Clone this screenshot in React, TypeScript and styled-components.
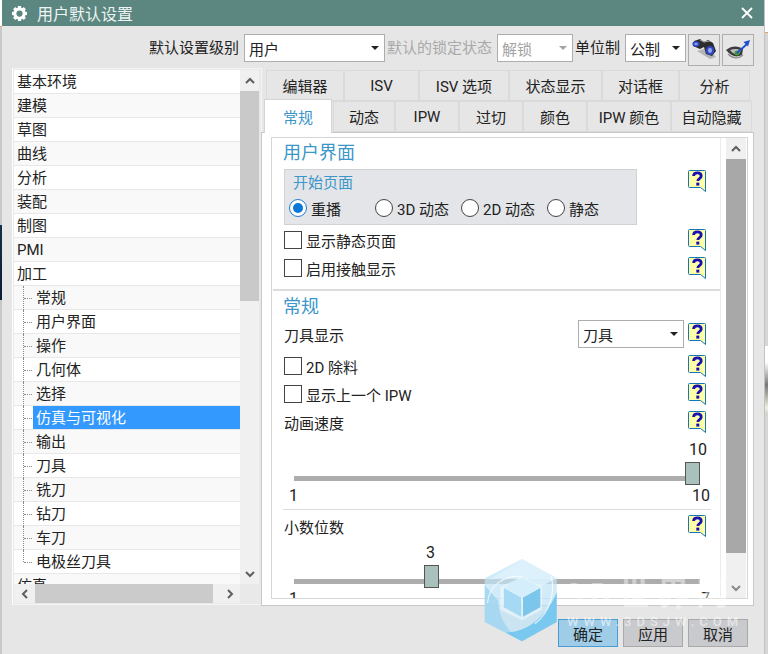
import React from "react";
import styled, { createGlobalStyle } from "styled-components";

const Global = createGlobalStyle`
  html, body { margin: 0; padding: 0; width: 768px; height: 654px; overflow: hidden; background: #d4d4d4; }
  * { box-sizing: border-box; }
  body { font-family: Roboto, "Noto Sans CJK SC", sans-serif; font-size: 15px; color: #222; }
`;

const Page = styled.div`
  position: relative;
  display: flex;
  width: 768px;
  height: 654px;
  overflow: hidden;
`;
const LeftStrip = styled.div`
  width: 2px;
  flex: none;
  background: linear-gradient(to bottom, #fff 0, #fff 26px, #e8a060 26px, #e8a060 27px, #c8c8c8 27px, #c8c8c8 225px, #16304f 225px, #0e1c33 300px, #c8c8c8 300px);
`;
const RightStrip = styled.div`
  flex: 1;
  background: linear-gradient(to bottom, #fff 0, #fff 32px, #e8a060 32px, #e8a060 33px, #d6d6d6 33px, #d6d6d6 346px, #fff 346px, #fff 362px, #777 385px, #f2f0e2 408px, #d0d0d0 414px, #d6d6d6 416px);
  border-left: 1px solid #c2c2c2;
`;
const Window = styled.div`
  width: 762px;
  flex: none;
  display: flex;
  flex-direction: column;
  background: #e6e6e6;
`;
const TitleBar = styled.div`
  height: 26px;
  flex: none;
  display: flex;
  align-items: center;
  background: #5c8780;
  color: #fff;
  padding: 0 11px 0 10px;
  font-size: 16px;
`;
const TitleText = styled.span`
  margin-left: 10px;
  flex: 1;
  color: #eef4f3;
`;
const Toolbar = styled.div`
  height: 42px;
  flex: none;
  display: flex;
  align-items: flex-start;
  padding: 8px 0 0 147px;
`;
const ToolLabel = styled.span<{ $muted?: boolean; $w: number; $pl?: number }>`
  width: ${(p) => p.$w}px;
  padding-left: ${(p) => p.$pl ?? 0}px;
  flex: none;
  height: 28px;
  line-height: 28px;
  white-space: nowrap;
  color: ${(p) => (p.$muted ? "#a9a9a9" : "#222")};
`;
const Select = styled.div<{ $w: number; $disabled?: boolean; $ml?: number }>`
  width: ${(p) => p.$w}px;
  margin-left: ${(p) => p.$ml ?? 0}px;
  height: 28px;
  flex: none;
  display: flex;
  align-items: center;
  justify-content: space-between;
  background: #fff;
  border: 1px solid #adadad;
  padding: 0 5px 0 4px;
  color: ${(p) => (p.$disabled ? "#a3a3a3" : "#222")};
`;
const Caret = styled.i<{ $disabled?: boolean }>`
  width: 0;
  height: 0;
  border-left: 4px solid transparent;
  border-right: 4px solid transparent;
  border-top: 4px solid ${(p) => (p.$disabled ? "#a3a3a3" : "#222")};
`;
const IconButton = styled.button<{ $ml: number }>`
  width: 32px;
  height: 32px;
  flex: none;
  margin-left: ${(p) => p.$ml}px;
  padding: 0;
  background: #e6e6e6;
  border: 1px solid #adadad;
  display: flex;
  align-items: center;
  justify-content: center;
`;
const Body = styled.div`
  flex: 1;
  display: flex;
  align-items: flex-start;
  padding: 0 0 0 10px;
`;
const Tree = styled.div`
  width: 250px;
  height: 537px;
  flex: none;
  background: #e9e9e9;
  border: 1px solid #f4f4f4;
  border-left-color: #fff;
  padding: 1px 2px 0 1px;
  display: grid;
  grid-template-columns: 226px 19px;
  grid-template-rows: 514px 19px;
`;
const TreeRows = styled.div`
  overflow: hidden;
  background: #fff;
`;
const Row = styled.div<{ $alt?: boolean }>`
  height: 24px;
  line-height: 23px;
  display: flex;
  align-items: center;
  padding: 2px 0 0 3px;
  background: ${(p) => (p.$alt ? "#f9f9f9" : "#fff")};
  border-bottom: 1px solid #e8e8e8;
  white-space: nowrap;
`;
const ChildRow = styled(Row)`
  position: relative;
  padding-left: 22px;
  &::before {
    content: "";
    position: absolute;
    left: 9px;
    top: 0;
    bottom: -1px;
    border-left: 1px dotted #8a8a8a;
  }
  &::after {
    content: "";
    position: absolute;
    left: 10px;
    top: 12px;
    width: 8px;
    border-top: 1px dotted #8a8a8a;
  }
`;
const LastChildRow = styled(ChildRow)`
  &::before { bottom: 11px; }
`;
const Selected = styled.span`
  display: block;
  flex: 1;
  margin: -2px 0 0 -3px;
  padding-left: 3px;
  line-height: 25px;
  height: 23px;
  background: #3399ff;
  color: #fff;
`;
const VScroll = styled.div<{ $w?: number; $mr?: number }>`
  display: flex;
  flex-direction: column;
  flex: none;
  width: ${(p) => (p.$w ? `${p.$w}px` : "auto")};
  margin-right: ${(p) => p.$mr ?? 0}px;
  background: #f0f0f0;
`;
const ArrowCell = styled.div`
  flex: none;
  height: 21px;
  display: flex;
  align-items: center;
  justify-content: center;
`;
const VThumb = styled.div<{ $h: number; $c: string }>`
  height: ${(p) => p.$h}px;
  flex: none;
  background: ${(p) => p.$c};
`;
const Spacer = styled.div`
  flex: 1;
`;
const HScroll = styled.div`
  display: flex;
  align-items: stretch;
  background: #f0f0f0;
`;
const HArrow = styled.div`
  width: 21px;
  flex: none;
  display: flex;
  align-items: center;
  justify-content: center;
`;
const HThumb = styled.div`
  width: 178px;
  flex: none;
  background: #cbcbcb;
`;
const RightColumn = styled.div`
  width: 494px;
  margin-left: 2px;
  flex: none;
`;
const TabRow = styled.div<{ $pl: number; $h: number }>`
  display: flex;
  height: ${(p) => p.$h}px;
  padding-left: ${(p) => p.$pl}px;
  align-items: flex-end;
`;
const Tab = styled.div<{ $w: number }>`
  width: ${(p) => p.$w}px;
  height: 31px;
  flex: none;
  display: flex;
  align-items: center;
  justify-content: center;
  background: #e6e6e6;
  border: 1px solid #dadada;
  white-space: nowrap;
`;
const ActiveTab = styled(Tab)`
  height: 34px;
  background: #fff;
  border-color: #d4d4d4;
  border-bottom: none;
  color: #3a94c6;
  position: relative;
  z-index: 1;
  margin: 0 1px -1px 0;
`;
const Outer = styled.div`
  width: 493px;
  height: 474px;
  margin-left: -3px;
  background: #fff;
  border: 1px solid #c8c8c8;
  padding: 4px 5px 6px 9px;
`;
const Inner = styled.div`
  height: 100%;
  border: 1px solid #d6d6d6;
  display: flex;
`;
const Scroller = styled.div`
  flex: 1;
  min-width: 0;
  overflow: hidden;
  border-right: 1px solid #ececec;
  margin-right: 5px;
`;
const Heading = styled.div<{ $mt?: number }>`
  font-size: 18px;
  line-height: 24px;
  color: #3b96c9;
  padding-left: 11px;
  margin-top: ${(p) => p.$mt ?? 0}px;
`;
const Line = styled.div<{ $h: number; $mt?: number }>`
  display: flex;
  align-items: center;
  height: ${(p) => p.$h}px;
  padding-left: 12px;
  padding-right: 13px;
  margin-top: ${(p) => p.$mt ?? 0}px;
`;
const Grow = styled.div`
  flex: 1;
`;
const GroupRow = styled.div`
  display: flex;
  padding: 4px 13px 0 12px;
  height: 61px;
`;
const Group = styled.div`
  width: 353px;
  height: 56px;
  background: #e3e5e8;
  border: 1px solid #d2d2d2;
  padding: 4px 0 0 4px;
  margin-right: 51px;
`;
const GroupHelp = styled.div`
  margin-top: 1px;
`;
const GroupTitle = styled.div`
  color: #3b96c9;
  line-height: 18px;
  padding-left: 4px;
`;
const Radios = styled.div`
  display: flex;
  height: 28px;
  align-items: center;
  margin-top: 2px;
`;
const RadioItem = styled.div<{ $w: number }>`
  width: ${(p) => p.$w}px;
  display: flex;
  align-items: center;
  gap: 4px;
  white-space: nowrap;
`;
const RadioDot = styled.span<{ $on?: boolean }>`
  width: 18px;
  height: 18px;
  flex: none;
  border-radius: 50%;
  background: #fff;
  border: 1px solid ${(p) => (p.$on ? "#1c7bd0" : "#444")};
  position: relative;
  ${(p) =>
    p.$on
      ? `&::after { content: ""; position: absolute; left: 3px; top: 3px; width: 10px; height: 10px; border-radius: 50%; background: #0a78d7; }`
      : ""}
`;
const Check = styled.span`
  width: 18px;
  height: 18px;
  flex: none;
  background: #fff;
  border: 1px solid #444;
  margin-right: 4px;
`;
const Divider = styled.div<{ $ml: number; $mr: number; $h: number; $mt: number }>`
  height: ${(p) => p.$h}px;
  background: #dcdcdc;
  margin: ${(p) => p.$mt}px ${(p) => p.$mr}px 0 ${(p) => p.$ml}px;
`;
const ToolSelect = styled(Select)`
  margin-right: 4px;
`;
const SliderTop = styled.div<{ $pl: number; $h: number; $pt?: number }>`
  height: ${(p) => p.$h}px;
  padding-left: ${(p) => p.$pl}px;
  padding-top: ${(p) => p.$pt ?? 0}px;
  font-size: 16px;
  line-height: 18px;
  white-space: nowrap;
`;
const Track = styled.div`
  position: relative;
  height: 23px;
  margin: 0 0 0 22px;
  width: 406px;
  &::before {
    content: "";
    position: absolute;
    left: 0;
    right: 0;
    top: 14px;
    height: 5px;
    background: #adadad;
  }
`;
const Thumb = styled.div<{ $left: number }>`
  position: absolute;
  left: ${(p) => p.$left}px;
  top: 0;
  width: 15px;
  height: 23px;
  background: #a9c0bd;
  border: 1px solid #555;
`;
const Ends = styled.div`
  display: flex;
  justify-content: space-between;
  height: 20px;
  align-items: center;
  padding: 0 0 0 17px;
  width: 438px;
  font-size: 16px;
`;
const Footer = styled.div`
  height: 49px;
  flex: none;
  display: flex;
  justify-content: flex-end;
  gap: 5px;
  padding: 13px 16px 0 0;
`;
const Btn = styled.button<{ $primary?: boolean }>`
  width: 60px;
  height: 28px;
  padding: 0;
  font: inherit;
  color: #222;
  background: ${(p) => (p.$primary ? "#9fcce7" : "#c9cacd")};
  border: 1px solid ${(p) => (p.$primary ? "#4b9cd2" : "#a9a9a9")};
`;
const Watermark = styled.div`
  position: absolute;
  left: 482px;
  top: 559px;
  width: 272px;
  height: 95px;
  pointer-events: none;
`;
const WmSvg = styled.svg`
  position: absolute;
  left: 0;
  top: 0;
`;
const HelpSvg = styled.svg`
  flex: none;
  display: block;
`;
const WmTitle = styled.div`
  position: absolute;
  left: 83px;
  top: 15px;
  font-size: 32px;
  line-height: 40px;
  font-weight: 700;
  letter-spacing: 7px;
  white-space: nowrap;
  color: rgba(255, 255, 255, 0.45);
`;
const WmUrl = styled.div`
  position: absolute;
  left: 85px;
  top: 54px;
  font-size: 13px;
  font-weight: 500;
  line-height: 18px;
  letter-spacing: 5px;
  white-space: nowrap;
  color: rgba(255, 255, 255, 0.55);
`;

const Chevron = ({ dir, c = "#5f5f5f", s = 10 }: { dir: "up" | "down" | "left" | "right"; c?: string; s?: number }) => {
  const d = {
    up: "M1 7 L5 3 L9 7",
    down: "M1 3 L5 7 L9 3",
    left: "M7 1 L3 5 L7 9",
    right: "M3 1 L7 5 L3 9",
  }[dir];
  return (
    <svg width={s} height={s} viewBox="0 0 10 10">
      <path d={d} fill="none" stroke={c} strokeWidth="2" />
    </svg>
  );
};

const Gear = () => (
  <svg width="15" height="15" viewBox="0 0 24 24">
    <g fill="#fff">
      <circle cx="12" cy="12" r="7.500" fill="none" stroke="#fff" strokeWidth="5" />
      <rect x="9.500" y="0" width="5" height="6" />
      <rect x="9.500" y="18" width="5" height="6" />
      <rect x="0" y="9.500" width="6" height="5" />
      <rect x="18" y="9.500" width="6" height="5" />
      <rect x="9.500" y="0" width="5" height="6" transform="rotate(45 12 12)" />
      <rect x="9.500" y="18" width="5" height="6" transform="rotate(45 12 12)" />
      <rect x="0" y="9.500" width="6" height="5" transform="rotate(45 12 12)" />
      <rect x="18" y="9.500" width="6" height="5" transform="rotate(45 12 12)" />
    </g>
  </svg>
);

const CloseX = () => (
  <svg width="12" height="12" viewBox="0 0 12 12">
    <path d="M1 1 L11 11 M11 1 L1 11" stroke="#fff" strokeWidth="1.8" />
  </svg>
);

const Binoculars = () => (
  <svg width="26" height="24" viewBox="0 0 26 24">
    <path d="M6 13 L19 21 L25 19 L16 10z" fill="#b4b4b4" />
    <path d="M3 3 L9 1 L13 4 L17 2 L22 5 L25 13 L21 18 L15 16 L13 9 L9 11 L2 8z" fill="#2c2c2c" />
    <path d="M9 2 L13 4 L19 3" stroke="#a5a5a5" strokeWidth="1" fill="none" />
    <ellipse cx="5" cy="6" rx="3.600" ry="2.800" fill="#2f49c4" />
    <ellipse cx="5" cy="6" rx="1.700" ry="1.200" fill="#8ea0ea" />
    <ellipse cx="19" cy="12.500" rx="4.200" ry="4.600" fill="#2f49c4" />
    <ellipse cx="19" cy="12.500" rx="2" ry="2.400" fill="#98a8ee" />
  </svg>
);

const EyeArrow = () => (
  <svg width="26" height="22" viewBox="0 0 26 22">
    <path d="M1 11 C7 6 14 7 18 10 L17 16 C11 19 6 17 1 11z" fill="#3c3c3c" />
    <path d="M5 11 C9 9.500 13 9.500 16 11.500 L14 15 C11 16 8 15 5 11z" fill="#bdbdbd" />
    <circle cx="12" cy="14" r="2.500" fill="#3f9a35" />
    <path d="M3 15 C8 20 14 20 18 16" stroke="#8e8e8e" strokeWidth="1.300" fill="none" />
    <path d="M12 14 L22 5" stroke="#1f4fd0" strokeWidth="1.800" />
    <path d="M25 1 L18.500 3 L23 7.500z" fill="#1f4fd0" />
  </svg>
);

const Help = () => (
  <HelpSvg width="19" height="23" viewBox="0 0 19 23">
    <path d="M1.500 .5 H16.500 Q17.500 .5 17.500 1.500 V21.500 L12.500 17.500 H1.500 Q.5 17.500 .5 16.500 V1.500 Q.5 .5 1.500 .5z" fill="#ffffa8" stroke="#1477b5" />
    <path d="M5.600 6 C5.800 1.800 13.200 2 13.200 6 C13.200 8.800 9.800 8.500 9.800 11" fill="none" stroke="#1a10b0" strokeWidth="2.800" />
    <rect x="8.300" y="12.600" width="3" height="3" fill="#1a10b0" />
  </HelpSvg>
);

const Logo = () => (
  <WmSvg width="82" height="84" viewBox="0 0 90 96" preserveAspectRatio="none">
    <path d="M44 0 L82 22 L82 72 L44 94 L3 72 L3 22z" fill="#bfe3f7" fillOpacity="0.72" />
    <path d="M44 0 L82 22 L60 34 C50 22 30 18 8 24z" fill="#dff2fc" fillOpacity="0.8" />
    <path d="M3 30 L3 72 L44 94 C28 84 18 66 18 48z" fill="#9ed3f0" fillOpacity="0.8" />
    <path d="M82 38 L82 72 L44 94 L26 84 C48 84 70 68 82 38z" fill="#6fc4ee" fillOpacity="0.9" />
    <path d="M20 32 L44 20 L66 32 L66 58 L44 70 L20 58z" fill="#ffffff" fillOpacity="0.45" />
    <path d="M44 21 L64 32 L44 44 L24 32z" fill="#d4eefb" />
    <path d="M24 33 L43 44 L43 66 L24 55z" fill="#a6d9f4" />
    <path d="M45 44 L64 33 L64 55 L45 66z" fill="#7cc6ec" />
    <path d="M6 50 C8 30 24 18 44 20 M76 20 C80 36 76 60 58 74" fill="none" stroke="#fff" strokeOpacity="0.75" strokeWidth="1.300" />
  </WmSvg>
);

const treeTop = ["基本环境", "建模", "草图", "曲线", "分析", "装配", "制图", "PMI", "加工"];
const treeChildren = ["常规", "用户界面", "操作", "几何体", "选择", "仿真与可视化", "输出", "刀具", "铣刀", "钻刀", "车刀", "电极丝刀具"];
const tabs1: [string, number][] = [["编辑器", 78], ["ISV", 75], ["ISV 选项", 90], ["状态显示", 93], ["对话框", 77], ["分析", 71]];
const tabs2: [string, number][] = [["动态", 62], ["IPW", 64], ["过切", 64], ["颜色", 64], ["IPW 颜色", 84], ["自动隐藏", 81]];

export default function App() {
  return (
    <Page>
      <Global />
      <LeftStrip />
      <Window>
        <TitleBar>
          <Gear />
          <TitleText>用户默认设置</TitleText>
          <CloseX />
        </TitleBar>
        <Toolbar>
          <ToolLabel $w={95}>默认设置级别</ToolLabel>
          <Select $w={141}>
            用户
            <Caret />
          </Select>
          <ToolLabel $muted $w={112} $pl={2}>默认的锁定状态</ToolLabel>
          <Select $w={76} $disabled>
            解锁
            <Caret $disabled />
          </Select>
          <ToolLabel $w={52} $pl={2}>单位制</ToolLabel>
          <Select $w={61}>
            公制
            <Caret />
          </Select>
          <IconButton $ml={2}>
            <Binoculars />
          </IconButton>
          <IconButton $ml={2}>
            <EyeArrow />
          </IconButton>
        </Toolbar>
        <Body>
          <Tree>
            <TreeRows>
              {treeTop.map((t, i) => (
                <Row key={t} $alt={i % 2 === 1}>{t}</Row>
              ))}
              {treeChildren.map((t, i) => {
                const R = i === treeChildren.length - 1 ? LastChildRow : ChildRow;
                return (
                  <R key={t} $alt={i % 2 === 0}>
                    {t === "仿真与可视化" ? <Selected>{t}</Selected> : t}
                  </R>
                );
              })}
              <Row $alt>仿真</Row>
            </TreeRows>
            <VScroll>
              <ArrowCell><Chevron dir="up" /></ArrowCell>
              <VThumb $h={210} $c="#c9c9c9" />
              <Spacer />
              <ArrowCell><Chevron dir="down" /></ArrowCell>
            </VScroll>
            <HScroll>
              <HArrow><Chevron dir="left" /></HArrow>
              <HThumb />
              <Spacer />
              <HArrow><Chevron dir="right" /></HArrow>
            </HScroll>
          </Tree>
          <RightColumn>
            <TabRow $pl={2} $h={33}>
              {tabs1.map(([t, w]) => (
                <Tab key={t} $w={w}>{t}</Tab>
              ))}
            </TabRow>
            <TabRow $pl={0} $h={31}>
              <ActiveTab $w={68}>常规</ActiveTab>
              {tabs2.map(([t, w]) => (
                <Tab key={t} $w={w}>{t}</Tab>
              ))}
            </TabRow>
            <Outer>
              <Inner>
                <Scroller>
                  <Heading $mt={3}>用户界面</Heading>
                  <GroupRow>
                    <Group>
                      <GroupTitle>开始页面</GroupTitle>
                      <Radios>
                        <RadioItem $w={86}><RadioDot $on />重播</RadioItem>
                        <RadioItem $w={86}><RadioDot />3D 动态</RadioItem>
                        <RadioItem $w={86}><RadioDot />2D 动态</RadioItem>
                        <RadioItem $w={60}><RadioDot />静态</RadioItem>
                      </Radios>
                    </Group>
                    <GroupHelp><Help /></GroupHelp>
                  </GroupRow>
                  <Line $h={28}><Check />显示静态页面<Grow /><Help /></Line>
                  <Line $h={28}><Check />启用接触显示<Grow /><Help /></Line>
                  <Divider $ml={1} $mr={0} $h={2} $mt={7} />
                  <Heading $mt={4}>常规</Heading>
                  <Line $h={30}>
                    刀具显示
                    <Grow />
                    <ToolSelect $w={106}>
                      刀具
                      <Caret />
                    </ToolSelect>
                    <Help />
                  </Line>
                  <Line $h={28} $mt={3}><Check />2D 除料<Grow /><Help /></Line>
                  <Line $h={28}><Check />显示上一个 IPW<Grow /><Help /></Line>
                  <Line $h={28}>动画速度<Grow /><Help /></Line>
                  <SliderTop $pl={417} $h={26} $pt={5}>10</SliderTop>
                  <Track><Thumb $left={391} /></Track>
                  <Ends><span>1</span><span>10</span></Ends>
                  <Divider $ml={11} $mr={9} $h={1} $mt={4} />
                  <Line $h={28} $mt={2}>小数位数<Grow /><Help /></Line>
                  <SliderTop $pl={154} $h={25} $pt={4}>3</SliderTop>
                  <Track><Thumb $left={130} /></Track>
                  <Ends><span>1</span><span>7</span></Ends>
                </Scroller>
                <VScroll $w={20} $mr={1}>
                  <ArrowCell><Chevron dir="up" /></ArrowCell>
                  <VThumb $h={394} $c="#a8a8a8" />
                  <Spacer />
                  <ArrowCell><Chevron dir="down" c="#8a8a8a" /></ArrowCell>
                </VScroll>
              </Inner>
            </Outer>
          </RightColumn>
        </Body>
        <Footer>
          <Btn $primary>确定</Btn>
          <Btn>应用</Btn>
          <Btn>取消</Btn>
        </Footer>
      </Window>
      <RightStrip />
      <Watermark>
        <Logo />
        <WmTitle>3D世界网</WmTitle>
        <WmUrl>WWW.3DSJW.COM</WmUrl>
      </Watermark>
    </Page>
  );
}
